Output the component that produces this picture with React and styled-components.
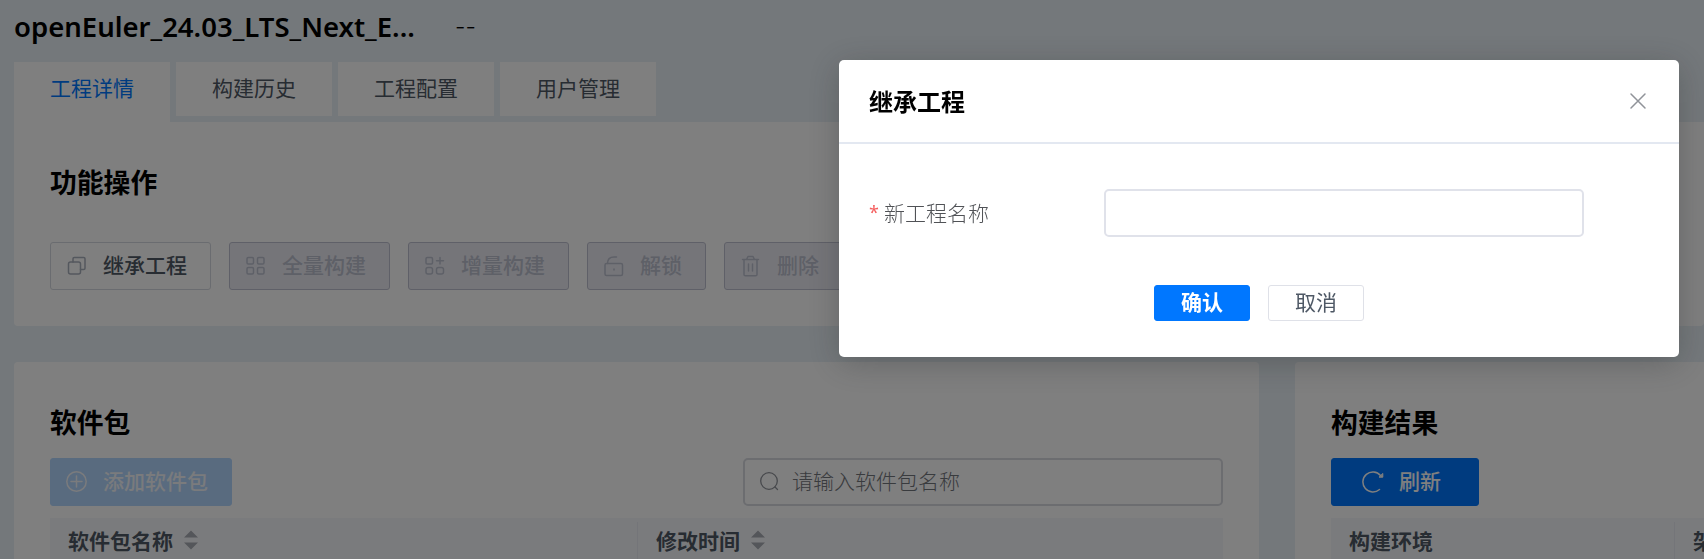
import React from "react";
import styled, { createGlobalStyle } from "styled-components";

const Global = createGlobalStyle`
  * { box-sizing: border-box; }
  html, body { margin: 0; padding: 0; height: 100%; overflow: hidden; }
  body {
    background: #e9f1f6;
    color: #000;
    font-family: "Noto Sans CJK SC", sans-serif;
    font-size: 21px;
  }
  button, input { font: inherit; }
`;

const Page = styled.div`
  height: 559px;
  padding-left: 14px;
  overflow: hidden;
`;

const Header = styled.header`
  display: flex;
  align-items: center;
  gap: 39px;
  height: 62px;
  padding-bottom: 8px;
`;

const ProjectName = styled.h1`
  margin: 0;
  width: 402px;
  font: 600 27.5px/40px "Noto Sans", sans-serif;
  white-space: nowrap;
`;

const Description = styled.span`
  font: 300 23px/40px Inter, sans-serif;
  font-feature-settings: "calt" 0;
`;

const Tabs = styled.nav`
  display: flex;
  gap: 6px;
  height: 60px;
`;

const Tab = styled.div`
  width: 156px;
  height: ${(p) => (p.$active ? 60 : 54)}px;
  background: #fff;
  color: ${(p) => (p.$active ? "#0077ff" : "#4e5865")};
  line-height: 51px;
  text-align: center;
`;

const Operations = styled.section`
  height: 204px;
  padding: 40px 36px 0;
  background: #fff;
  border-radius: 0 0 4px 4px;
`;

const SectionTitle = styled.h2`
  margin: 0;
  font-size: 26.8px;
  font-weight: 700;
  line-height: 40px;
`;

const ButtonRow = styled.div`
  display: flex;
  gap: 18px;
  margin-top: 40px;
`;

const variants = {
  plain: "background:#fff;border-color:#d5d8e0;color:#4e5865;",
  disabled: "background:#ebebf3;border-color:#bfc1d0;color:#bcc0cf;",
  primary: "background:#0077ff;border-color:#0077ff;color:#fff;",
  primaryDisabled: "background:#b2d6ff;border-color:#b2d6ff;color:#f4f6fa;",
};

const ActionButton = styled.button`
  display: flex;
  align-items: center;
  gap: 15px;
  flex: none;
  height: 48px;
  padding: 0 0 0 ${(p) => p.$indent || 15}px;
  border: 1px solid;
  border-radius: 3px;
  font-weight: 500;
  line-height: 40px;
  white-space: nowrap;
  ${(p) => variants[p.$variant]}
  width: ${(p) => p.$width}px;
  svg { flex: none; }
`;

const ButtonLabel = styled.span`
  padding-bottom: 4px;
`;

const Columns = styled.div`
  display: flex;
  gap: 36px;
  margin-top: 36px;
`;

const Card = styled.section`
  flex: none;
  width: ${(p) => p.$width}px;
  height: 240px;
  padding: 40px 36px 0;
  background: #fff;
  border-radius: 4px;
`;

const Toolbar = styled.div`
  display: flex;
  justify-content: space-between;
  margin-top: 16px;
`;

const SearchBox = styled.label`
  display: flex;
  align-items: center;
  gap: 11px;
  width: 480px;
  height: 48px;
  padding-left: 14px;
  border: 2px solid #d8dae1;
  border-radius: 5px;
  color: #8f9299;
`;

const SearchInput = styled.input`
  flex: 1;
  min-width: 0;
  padding: 0 0 4px;
  border: 0;
  outline: 0;
  background: none;
  font-weight: 300;
  &::placeholder { color: #73767c; opacity: 1; }
`;

const TableHead = styled.div`
  display: flex;
  height: 56px;
  margin-top: 12px;
  padding-top: 4px;
  background: #f5f7fa;
`;

const HeadCell = styled.div`
  display: flex;
  align-items: center;
  gap: 11px;
  flex: none;
  width: ${(p) => p.$width}px;
  height: 38px;
  padding: 0 0 2px 18px;
  border-right: 1px solid #e9ebf2;
  color: #4e5865;
  font-weight: 700;
  line-height: 34px;
  &:last-child { border-right: 0; }
`;

const Overlay = styled.div`
  position: fixed;
  inset: 0;
  background: rgba(0, 0, 0, 0.5);
`;

const Dialog = styled.div`
  position: absolute;
  top: 60px;
  left: 839px;
  width: 840px;
  height: 297px;
  border-radius: 5px;
  background: #fff;
  box-shadow: 0 6px 32px rgba(45, 47, 51, 0.32);
`;

const DialogHeader = styled.div`
  display: flex;
  align-items: center;
  justify-content: space-between;
  height: 84px;
  padding: 0 30px 0 30px;
  border-bottom: 2px solid #e3e8f1;
`;

const DialogTitle = styled.h3`
  margin: 0;
  font-size: 24px;
  font-weight: 700;
  line-height: 38px;
`;

const FormRow = styled.div`
  display: flex;
  align-items: center;
  margin-top: 45px;
  padding-left: 30px;
`;

const FieldLabel = styled.label`
  display: flex;
  gap: 5px;
  width: 235px;
  padding-bottom: 2px;
  color: #505256;
  font-weight: 300;
  line-height: 40px;
`;

const Required = styled.span`
  width: 10px;
  color: #f56060;
  font: 400 18px/40px "Noto Sans", sans-serif;
`;

const TextField = styled.input`
  width: 480px;
  height: 48px;
  border: 2px solid #e0e2ea;
  border-radius: 5px;
  outline: 0;
`;

const DialogFooter = styled.div`
  display: flex;
  justify-content: center;
  gap: 18px;
  margin-top: 48px;
`;

const SmallButton = styled.button`
  width: 96px;
  height: 36px;
  padding: 0 0 4px;
  border: 1px solid ${(p) => (p.$primary ? "#0077ff" : "#dfe1e8")};
  border-radius: 3px;
  background: ${(p) => (p.$primary ? "#0077ff" : "#fff")};
  color: ${(p) => (p.$primary ? "#fff" : "#4e5865")};
  font-weight: ${(p) => (p.$primary ? 700 : 400)};
  line-height: 28px;
`;

const Icon = ({ size = 22, children, sw = 1.5 }) => (
  <svg width={size} height={size} viewBox="0 0 22 22" fill="none" stroke="currentColor" strokeWidth={sw} strokeLinecap="round" strokeLinejoin="round">
    {children}
  </svg>
);

const CopyIcon = () => (
  <Icon>
    <g stroke="#a9b0bc">
      <rect x="2.5" y="7" width="12" height="12" rx="2" />
      <path d="M7 7V3.700A1.200 1.200 0 0 1 8.200 2.500H17.800A1.200 1.200 0 0 1 19 3.700V13.300A1.200 1.200 0 0 1 17.800 14.500H14.500" />
    </g>
  </Icon>
);
const GridIcon = () => (
  <Icon>
    <rect x="2" y="2.500" width="6.500" height="6.500" rx="1.200" />
    <rect x="12.500" y="2.500" width="6.500" height="6.500" rx="1.200" />
    <rect x="2" y="12.500" width="6.500" height="6.500" rx="1.200" />
    <rect x="12.500" y="12.500" width="6.500" height="6.500" rx="1.200" />
  </Icon>
);
const GridPlusIcon = () => (
  <Icon>
    <rect x="2" y="2.500" width="6.500" height="6.500" rx="1.200" />
    <path d="M12.500 5.750H19.500M16 2.500V9" />
    <rect x="2" y="12.500" width="6.500" height="6.500" rx="2" />
    <rect x="12.500" y="12.500" width="7" height="6.500" rx="2" />
  </Icon>
);
const UnlockIcon = () => (
  <Icon>
    <rect x="2" y="8.500" width="17.500" height="12" rx="1.500" />
    <path d="M4.500 8.500C4.500 4 7 2 11 2H13.500M11 14V15" />
  </Icon>
);
const TrashIcon = () => (
  <Icon>
    <path d="M2.500 4.500H18.500M6.500 4.500L8 1.500H13L14.500 4.500M4 4.500V19.500A1.300 1.300 0 0 0 5.300 20.800H15.700A1.300 1.300 0 0 0 17 19.500V4.500M8.500 9V16M12.500 9V16" />
  </Icon>
);
const AddIcon = () => (
  <Icon>
    <circle cx="10.500" cy="10.500" r="9.700" />
    <path d="M5 10.500H16M10.500 5V16" />
  </Icon>
);
const SearchIcon = () => (
  <Icon sw={1.3}>
    <circle cx="10" cy="10" r="8.300" />
    <path d="M16 16L18.500 18.500" />
  </Icon>
);
const RefreshIcon = () => (
  <Icon>
    <path d="M17.500 18.500A10 10 0 1 1 18.500 4.500" />
    <path d="M20.800 2.800V6.200H17.400Z" fill="currentColor" strokeWidth="1" />
  </Icon>
);
const CloseIcon = () => (
  <Icon>
    <path d="M4 4L18 18M18 4L4 18" stroke="#909399" />
  </Icon>
);
const SortIcon = () => (
  <svg width="14" height="20" viewBox="0 0 14 20" fill="#a9acb4">
    <path d="M7 0.500L14 7.500H0ZM0 12.500H14L7 19.500Z" />
  </svg>
);

export default function App() {
  return (
    <>
      <Global />
      <Page>
        <Header>
          <ProjectName>openEuler_24.03_LTS_Next_E...</ProjectName>
          <Description>--</Description>
        </Header>
        <Tabs>
          <Tab $active>工程详情</Tab>
          <Tab>构建历史</Tab>
          <Tab>工程配置</Tab>
          <Tab>用户管理</Tab>
        </Tabs>
        <Operations>
          <SectionTitle>功能操作</SectionTitle>
          <ButtonRow>
            <ActionButton $variant="plain" $width={161}><CopyIcon /><ButtonLabel>继承工程</ButtonLabel></ActionButton>
            <ActionButton $variant="disabled" $width={161}><GridIcon /><ButtonLabel>全量构建</ButtonLabel></ActionButton>
            <ActionButton $variant="disabled" $width={161}><GridPlusIcon /><ButtonLabel>增量构建</ButtonLabel></ActionButton>
            <ActionButton $variant="disabled" $width={119}><UnlockIcon /><ButtonLabel>解锁</ButtonLabel></ActionButton>
            <ActionButton $variant="disabled" $width={119}><TrashIcon /><ButtonLabel>删除</ButtonLabel></ActionButton>
          </ButtonRow>
        </Operations>
        <Columns>
          <Card $width={1245}>
            <SectionTitle>软件包</SectionTitle>
            <Toolbar>
              <ActionButton $variant="primaryDisabled" $width={182}><AddIcon /><ButtonLabel>添加软件包</ButtonLabel></ActionButton>
              <SearchBox>
                <SearchIcon />
                <SearchInput placeholder="请输入软件包名称" />
              </SearchBox>
            </Toolbar>
            <TableHead>
              <HeadCell $width={588}>软件包名称<SortIcon /></HeadCell>
              <HeadCell $width={585}>修改时间<SortIcon /></HeadCell>
            </TableHead>
          </Card>
          <Card $width={600}>
            <SectionTitle>构建结果</SectionTitle>
            <Toolbar>
              <ActionButton $variant="primary" $width={148} $indent={30}><RefreshIcon /><ButtonLabel>刷新</ButtonLabel></ActionButton>
            </Toolbar>
            <TableHead>
              <HeadCell $width={344}>构建环境</HeadCell>
              <HeadCell $width={184}>架构</HeadCell>
            </TableHead>
          </Card>
        </Columns>
      </Page>
      <Overlay>
        <Dialog role="dialog">
          <DialogHeader>
            <DialogTitle>继承工程</DialogTitle>
            <CloseIcon />
          </DialogHeader>
          <FormRow>
            <FieldLabel><Required>*</Required>新工程名称</FieldLabel>
            <TextField />
          </FormRow>
          <DialogFooter>
            <SmallButton $primary>确认</SmallButton>
            <SmallButton>取消</SmallButton>
          </DialogFooter>
        </Dialog>
      </Overlay>
    </>
  );
}
